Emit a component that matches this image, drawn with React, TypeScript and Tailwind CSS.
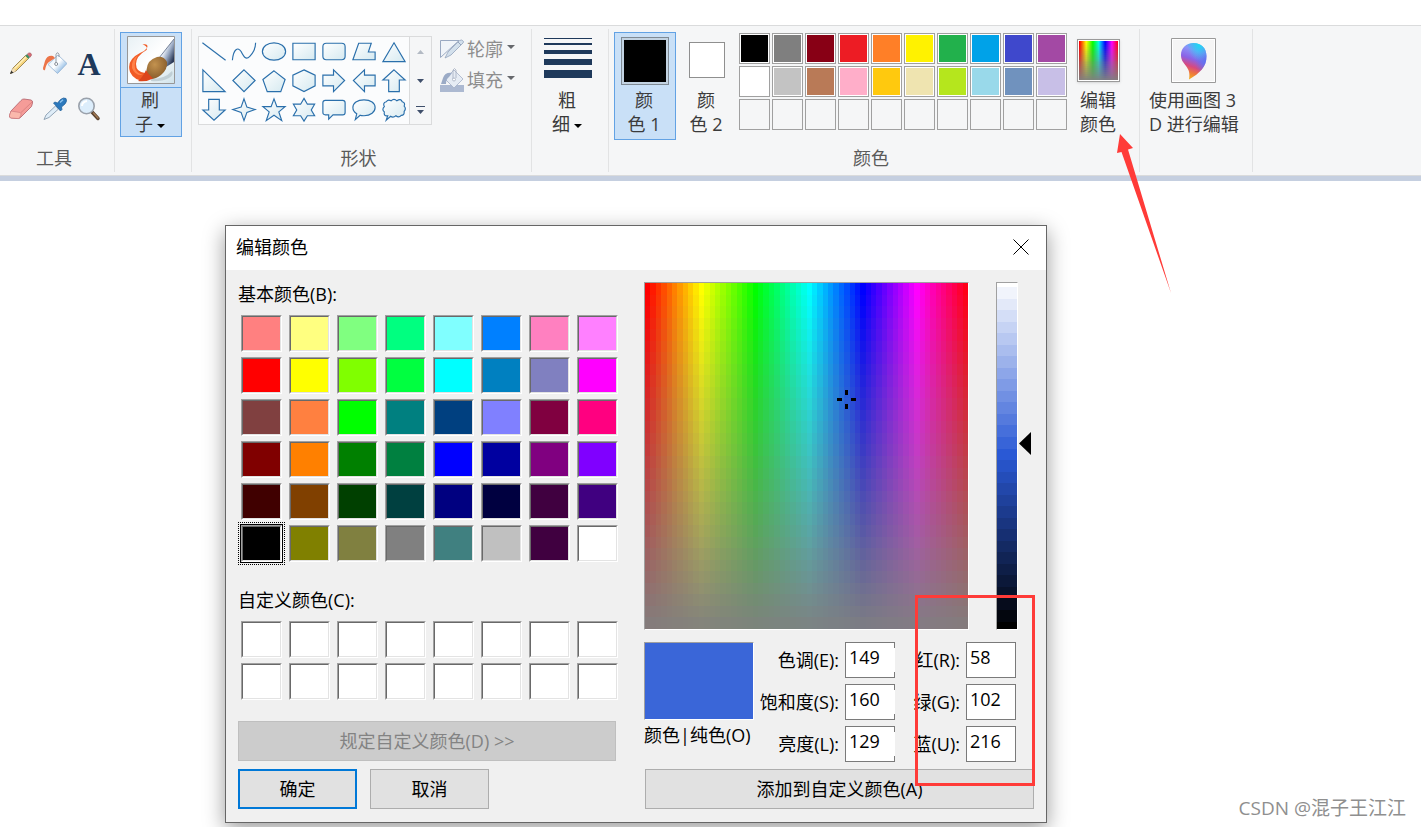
import { useState } from 'react'
import type { ReactNode } from 'react'

const PALETTE = [
  '#000000', '#7f7f7f', '#880015', '#ed1c24', '#ff7f27', '#fff200', '#22b14c', '#00a2e8', '#3f48cc', '#a349a4',
  '#ffffff', '#c3c3c3', '#b97a57', '#ffaec9', '#ffc90e', '#efe4b0', '#b5e61d', '#99d9ea', '#7092be', '#c8bfe7',
]

const BASIC_COLORS = [
  '#ff8080', '#ffff80', '#80ff80', '#00ff80', '#80ffff', '#0080ff', '#ff80c0', '#ff80ff',
  '#ff0000', '#ffff00', '#80ff00', '#00ff40', '#00ffff', '#0080c0', '#8080c0', '#ff00ff',
  '#804040', '#ff8040', '#00ff00', '#008080', '#004080', '#8080ff', '#800040', '#ff0080',
  '#800000', '#ff8000', '#008000', '#008040', '#0000ff', '#0000a0', '#800080', '#8000ff',
  '#400000', '#804000', '#004000', '#004040', '#000080', '#000040', '#400040', '#400080',
  '#000000', '#808000', '#808040', '#808080', '#408080', '#c0c0c0', '#400040', '#ffffff',
]

// Gallery outlines, each drawn in a 30x30 cell
const SHAPES = [
  'M3 6L27 24',
  'M3 24C4 12 9 10 12 15C15 21 17 24 21 20C25 16 27 12 27 6',
  'M15 6C21.600 6 27 10 27 15S21.600 24 15 24S3 20 3 15S8.400 6 15 6Z',
  'M3.500 6.500H26.500V23.500H3.500Z',
  'M7 6.500H23Q26.500 6.500 26.500 10V20Q26.500 23.500 23 23.500H7Q3.500 23.500 3.500 20V10Q3.500 6.500 7 6.500Z',
  'M9.500 6.500H22.500L19.500 15.500H26.500V23.500H3.500Z',
  'M15 6L26.500 25.500H3.500Z',
  'M3.500 4L26.500 26.500H3.500Z',
  'M15 4L26.500 15L15 26.500L3.500 15Z',
  'M15 5L26.500 14L22 26.500H8L3.500 14Z',
  'M15 4L26.500 9.500V20.500L15 26.500L3.500 20.500V9.500Z',
  'M3.500 9.500H14.500V4L26 15L14.500 26.500V20.500H3.500Z',
  'M26.500 9.500H15.500V4L4 15L15.500 26.500V20.500H26.500Z',
  'M15 4L26.500 14.500H20.500V26.500H9.500V14.500H3.500Z',
  'M9.500 4.500H20.500V15.500H26.500L15 26L3.500 15.500H9.500Z',
  'M15 4L18 12.500L26.500 15L18 18L15 26.500L12 18L3.500 15L12 12.500Z',
  'M15 4L18 12H26.500L20 17.500L23 26.500L15 21L7 26.500L10 17.500L3.500 12H12Z',
  'M15 3.500L18.500 9.500H26L22.500 15.500L26 21.500H18.500L15 27L11.500 21.500H4L7.500 15.500L4 9.500H11.500Z',
  'M6 5.500H24Q26.500 5.500 26.500 8V18Q26.500 20.500 24 20.500H14L9.500 25V20.500H6Q3.500 20.500 3.500 18V8Q3.500 5.500 6 5.500Z',
  'M15 5C22 5 26.500 8.500 26.500 13S22 21.500 15 21.500C13.500 21.500 12 21.500 11 21L6 25.500L7.500 19.500C5 18 3.500 16 3.500 13C3.500 8.500 8 5 15 5Z',
  'M7 7Q9 4 12 6Q15 3 18 6Q22 3 23.500 7Q27 8 25.500 11.500Q28 14 25.500 17Q26 21 22.500 21Q20 24 17 21.500Q14 24 11.500 22L7 26L8.500 21.500Q4 22 5 17.500Q2 15 5 12Q3 8 7 7Z',
]

const CAPTION = 'text-[18px] leading-6'

function Group({ label, className, children }: { label?: string; className: string; children: ReactNode }) {
  return (
    <section className={`flex shrink-0 flex-col border-r border-[#e2e3e4] ${className}`}>
      <div className="flex flex-1 items-start pl-[5px] pt-[3px]">{children}</div>
      {label && <div className={`pr-1.5 pb-0.5 text-center text-[#5a5a5a] ${CAPTION}`}>{label}</div>}
    </section>
  )
}

function Caret() {
  return (
    <svg className="ml-1 inline-block align-middle" width="8" height="4" viewBox="0 0 8 4">
      <path d="M0 0H8L4 4Z" fill="currentColor" />
    </svg>
  )
}

function ToolButton({ name, children }: { name: string; children: ReactNode }) {
  return (
    <button aria-label={name} className="block size-6">
      <svg width="24" height="24" viewBox="0 0 24 24">{children}</svg>
    </button>
  )
}

function Spectrum({ cols, rows }: { cols: number; rows: number }) {
  const cells = []
  for (let r = 0; r < rows; r++) {
    for (let c = 0; c < cols; c++) {
      cells.push(
        <rect key={`${r}-${c}`} x={c} y={r} width="1" height="1" fill={`hsl(${(c * 360) / cols} ${100 - (r * 100) / rows}% 50%)`} />
      )
    }
  }
  return (
    <svg className="block size-full" viewBox={`0 0 ${cols} ${rows}`} preserveAspectRatio="none" shapeRendering="crispEdges">
      {cells}
    </svg>
  )
}

function LuminosityBar() {
  return (
    <svg className="block size-full" viewBox="0 0 1 60" preserveAspectRatio="none" shapeRendering="crispEdges">
      {Array.from({ length: 31 }, (_, i) => (
        <rect key={i} x="0" y={i * 2 - 1.3} width="1" height="2.300" fill={`hsl(223.5 67% ${100 - (i * 100) / 30}%)`} />
      ))}
    </svg>
  )
}

function Swatch({ color, selected, onClick }: { color: string; selected?: boolean; onClick?: () => void }) {
  return (
    <button
      aria-label={color}
      onClick={onClick}
      className={`h-[37px] border border-t-[#a0a0a0] border-l-[#a0a0a0] border-r-white border-b-white ${selected ? 'ring-1 ring-black outline-1 outline-offset-2 outline-dotted outline-black' : ''}`}
    >
      <span
        className="block size-full border border-t-[#696969] border-l-[#696969] border-r-[#e3e3e3] border-b-[#e3e3e3]"
        style={{ backgroundColor: color }}
      />
    </button>
  )
}

function Field({ id, label, value, spin }: { id: string; label: string; value: string; spin?: boolean }) {
  return (
    <div className="flex items-center justify-end">
      <label htmlFor={id} className="whitespace-nowrap">{label}</label>
      <div className="relative ml-1.5">
        <input
          id={id}
          defaultValue={value}
          className="block h-9 w-[50px] border border-[#7a7a7a] bg-white pb-1.5 pl-[3px] text-[18px] outline-none"
        />
        {spin && <span className="absolute inset-y-1.5 right-0 w-px bg-white" />}
      </div>
    </div>
  )
}

function Ribbon() {
  return (
    <header className="flex h-[156px] border-t border-b-[5px] border-t-[#dadbdc] border-b-[#c5cfe0] bg-[#f5f6f7] pt-[3px] pb-1 text-[#3b3b3b] shadow-[inset_0_-1px_0_#dadbdc]">
      <Group label="工具" className="w-[115px]">
        <div className="grid grid-cols-3 gap-x-2.5 gap-y-[21px] pl-1 pt-5">
          <ToolButton name="铅笔">
            <path d="M1.500 21.500L4 16L16.500 3.500L19.500 6.500L7 19Z" fill="#f6d57c" stroke="#8a7440" strokeWidth="0.800" />
            <path d="M5.500 16.500L17 5" stroke="#fdf0bd" strokeWidth="1.500" />
            <path d="M18 2.500L19.500 1.200Q21 0.500 22 1.500Q23 3 22 4L20.800 5.300Z" fill="#dd6a74" stroke="#a45a62" strokeWidth="0.700" />
            <path d="M16.300 3.800L18 2.300L20.800 5.200L19.300 6.700Z" fill="#3f8f67" />
            <path d="M4 16L7 19L3.500 20.500L2.500 19.500Z" fill="#f3dfbd" />
            <path d="M1 22L2.300 18.800L4.500 20.700Z" fill="#333" />
          </ToolButton>
          <ToolButton name="用颜色填充">
            <defs>
              <linearGradient id="bucket" x1="0" y1="0.200" x2="0.900" y2="1">
                <stop offset="0" stopColor="#dcecf9" />
                <stop offset="0.450" stopColor="#ffffff" />
                <stop offset="1" stopColor="#5b9bd8" />
              </linearGradient>
            </defs>
            <path d="M15 3L24 11.500L14.500 21.500L5 12.500Z" fill="url(#bucket)" stroke="#93b3d3" strokeWidth="0.800" />
            <path d="M10 4Q4 3 2 9L0 16Q0 19 2 18Q3 12 6 10L12 6Z" fill="#ec7448" />
            <path d="M13 11V2.500Q14.500 -1 16 2.500V5" fill="none" stroke="#8a929c" strokeWidth="0.900" />
            <circle cx="13.200" cy="12" r="1.500" fill="#fff" stroke="#7d858f" strokeWidth="0.900" />
          </ToolButton>
          <button aria-label="文本" className="block size-6 text-center font-['Liberation_Serif',serif] text-[32px] leading-6 font-bold text-[#1e395b]">
            A
          </button>
          <ToolButton name="橡皮擦">
            <path d="M12 3.500Q13 2 15 2L22 3Q24 3.500 23.500 6L22.500 9.500L12 20Q10.500 22 8 21.500L2 21Q0 20.500 0.500 18.500L2 14Z" fill="#f59c98" stroke="#b0606a" strokeWidth="0.800" />
            <path d="M2 14L11 15.500Q12.500 16 12 18L10.500 21Q9.500 22 8 21.500L2 21Q0 20.500 0.500 18.500Z" fill="#fab8ac" stroke="#c9737a" strokeWidth="0.600" />
            <path d="M12 15.500L23 5" stroke="#d67c7c" strokeWidth="0.800" />
          </ToolButton>
          <ToolButton name="颜色选取器">
            <path d="M1 22.500L3 18L12.500 9L15.500 12L6 20.500Z" fill="#dfedf8" stroke="#8a9db0" strokeWidth="0.900" />
            <path d="M10.500 6L12 5L14.500 6L17.500 2.500Q20.500 0 23 1.500Q24.500 4 22 7L18.500 10L19 12.500L17.500 14Z" fill="#2c79bd" stroke="#1c5c97" strokeWidth="0.700" />
            <path d="M17 5.500L20 2.800" stroke="#8cc3ee" strokeWidth="1.500" />
          </ToolButton>
          <ToolButton name="放大镜">
            <path d="M15 15L21 21.500" stroke="#5b4330" strokeWidth="3.500" strokeLinecap="round" />
            <path d="M16.500 16L21 21" stroke="#a47b55" strokeWidth="1.300" strokeLinecap="round" />
            <circle cx="9.500" cy="9" r="7.700" fill="#dcedfb" stroke="#9aa1ab" strokeWidth="1.600" />
            <path d="M5 9Q5 5 10 4" stroke="#fff" strokeWidth="2" fill="none" />
          </ToolButton>
        </div>
      </Group>

      <Group className="w-[77px]">
        <button className="w-[62px] border border-[#62a2e4] bg-[#c9e0f7]">
          <span className="flex h-[55px] items-center justify-center border-b border-[#62a2e4]">
            <svg width="48" height="48" viewBox="0 0 48 48">
              <defs>
                <linearGradient id="paper" x1="0" y1="0" x2="1" y2="1">
                  <stop offset="0" stopColor="#e8f1f5" />
                  <stop offset="0.500" stopColor="#ffffff" />
                  <stop offset="1" stopColor="#cfe2ea" />
                </linearGradient>
                <linearGradient id="ferrule" x1="0.100" y1="0.300" x2="0.800" y2="0.900">
                  <stop offset="0" stopColor="#8c9ab2" />
                  <stop offset="0.250" stopColor="#f4f8ff" />
                  <stop offset="0.600" stopColor="#98a8c2" />
                  <stop offset="1" stopColor="#2c3a58" />
                </linearGradient>
                <radialGradient id="bristle" cx="0.400" cy="0.350" r="0.700">
                  <stop offset="0" stopColor="#c3924f" />
                  <stop offset="1" stopColor="#855a2a" />
                </radialGradient>
              </defs>
              <path d="M0.500 0.500H47.500V47.500H0.500Z" fill="url(#paper)" stroke="#979797" />
              <path d="M24 43Q38 43 45 35Q47 39 42 42Q34 46 24 45Z" fill="#b4c3ca" opacity="0.700" />
              <path d="M19.500 14Q21.500 11 15.500 8Q22 8 20 12Q18 15 13 17Q-1 24 3 36Q7 45 19 45L23 41L18 37Q9 36 9 28Q9 20 19.500 14Z" fill="#f15c26" />
              <path d="M5 32Q4 24 11 19Q7 25 8 32Q9 37 16 39Q8 40 5 32Z" fill="#ff8149" />
              <path d="M32 22L47 3V26L39 31Z" fill="url(#ferrule)" />
              <path d="M32 22L47 3" stroke="#5a6a84" strokeWidth="0.800" />
              <path d="M19.500 34Q20 24 30 21Q37 20 40 26Q41 33 34 39Q29 43 24 43Q20 40 19.500 34Z" fill="url(#bristle)" />
              <path d="M19 34Q21 38 26 42.500Q20 46 11 45Q16 41 19 34Z" fill="#dc451b" />
            </svg>
          </span>
          <span className={`block pr-0.5 ${CAPTION}`}>
            刷<br />子<span className="text-black"><Caret /></span>
          </span>
        </button>
      </Group>

      <Group label="形状" className="w-[340px]">
        <div className="flex pl-px pt-1">
          <div className="grid grid-cols-7 border border-[#dadbdc] bg-[#fbfcfd]">
            {SHAPES.map((d, i) => (
              <button key={i} aria-label={`形状 ${i + 1}`} className="block h-[29px] w-[30px]">
                <svg width="30" height="29" viewBox="0 0 30 30">
                  <defs>
                    <linearGradient id="shape" x1="0" y1="0" x2="1" y2="1">
                      <stop offset="0" stopColor="#ffffff" />
                      <stop offset="1" stopColor="#d5e9f0" />
                    </linearGradient>
                  </defs>
                  <path d={d} fill={i < 2 ? 'none' : 'url(#shape)'} stroke="#2a6fab" strokeWidth="1.200" />
                </svg>
              </button>
            ))}
          </div>
          <div className="flex w-[22px] flex-col border border-l-0 border-[#dadbdc] text-[#3f4f6b]">
            <button aria-label="上移" className="flex flex-1 items-center justify-center text-[#b3bac4]">
              <svg width="7" height="4" viewBox="0 0 7 4"><path d="M3.500 0L7 4H0Z" fill="currentColor" /></svg>
            </button>
            <button aria-label="下移" className="flex flex-1 items-center justify-center">
              <svg width="7" height="4" viewBox="0 0 7 4"><path d="M0 0H7L3.500 4Z" fill="currentColor" /></svg>
            </button>
            <button aria-label="更多" className="flex flex-1 items-center justify-center">
              <svg width="9" height="8" viewBox="0 0 9 8"><path d="M0 0H9V1H0ZM1 4H8L4.500 8Z" fill="currentColor" /></svg>
            </button>
          </div>
        </div>
        <div className={`flex flex-col pl-2 pt-px text-[#8d8d8d] ${CAPTION}`}>
          <button className="flex h-[31px] items-center">
            <svg width="24" height="24" viewBox="0 0 24 24">
              <path d="M0.500 20.500V3.500H19Z" fill="#f0f4f9" stroke="#9aa9c2" />
              <path d="M5 21L8 15L19.500 3.500Q22 2 23.500 4.500Q23.500 6 22 7L11 18Z" fill="#d3e0ec" stroke="#93a3bc" strokeWidth="0.800" />
              <path d="M18 5L21 8" stroke="#93a3bc" />
            </svg>
            <span className="ml-[3px]">轮廓</span>
            <span className="flex pb-1 text-[#66686c]"><Caret /></span>
          </button>
          <button className="flex h-[31px] items-center">
            <svg width="24" height="24" viewBox="0 0 24 24">
              <path d="M0 17H24V24H0Z" fill="#acb9d1" />
              <path d="M14 2L23 11L14 20L5 11Z" fill="#e6ecf4" stroke="#a3b0c7" strokeWidth="0.800" />
              <path d="M12 5Q5 4 3 10L1 16H6Q6 11 9 9Z" fill="#9babc6" />
              <path d="M13 11V2Q14.500 -1 16 2V10" fill="none" stroke="#a3adbf" strokeWidth="0.800" />
              <circle cx="14" cy="11.500" r="1.500" fill="#fff" stroke="#a3adbf" strokeWidth="0.800" />
            </svg>
            <span className="ml-[3px]">填充</span>
            <span className="flex pb-1 text-[#66686c]"><Caret /></span>
          </button>
        </div>
      </Group>

      <Group className="w-[77px]">
        <button className="w-[62px]">
          <span className="flex h-14 items-start justify-center pt-1.5">
            <svg width="48" height="40" viewBox="0 0 48 40">
              <path d="M0 0H48V1H0ZM0 5H48V7H0ZM0 12H48V16H0ZM0 21H48V27H0ZM0 32H48V40H0Z" fill="#1e395b" />
            </svg>
          </span>
          <span className={`block pr-0.5 ${CAPTION}`}>
            粗<br />细<span className="text-black"><Caret /></span>
          </span>
        </button>
      </Group>

      <Group label="颜色" className="w-[531px]">
        <button className="w-[62px] border border-[#62a2e4] bg-[#c9e0f7] pb-[3px]">
          <span className="flex h-[55px] items-center justify-center">
            <span className="size-12 border border-[#7f8a94] bg-[#c3d3e2] p-0.5"><span className="block size-full bg-black" /></span>
          </span>
          <span className={`block pr-0.5 ${CAPTION}`}>颜<br />色 1</span>
        </button>
        <button className="w-[62px]">
          <span className="flex h-14 items-center justify-center">
            <span className="size-9 border border-[#8f8f8f] bg-white" />
          </span>
          <span className={`block pr-0.5 ${CAPTION}`}>颜<br />色 2</span>
        </button>
        <div className="grid grid-cols-10 gap-0.5 pl-px pt-px">
          {PALETTE.map((c) => (
            <button key={c} aria-label={c} className="size-[31px] border border-[#a0a0a0] bg-white p-px">
              <span className="block size-full" style={{ backgroundColor: c }} />
            </button>
          ))}
          {Array.from({ length: 10 }, (_, i) => (
            <button key={i} aria-label="空" className="size-[31px] border border-[#a0a0a0]" />
          ))}
        </div>
        <button className="w-[62px]">
          <span className="flex h-14 items-center justify-center">
            <span className="size-[43px] border border-[#9a9a9a] bg-white p-px shadow-sm"><Spectrum cols={40} rows={20} /></span>
          </span>
          <span className={`block ${CAPTION}`}>编辑<br />颜色</span>
        </button>
      </Group>

      <Group className="w-[113px]">
        <button className="w-[98px] pl-1">
          <span className="flex h-14 items-center">
            <svg className="ml-[22px]" width="45" height="45" viewBox="0 0 45 45">
              <defs>
                <linearGradient id="drop" x1="0.600" y1="0" x2="0.350" y2="1">
                  <stop offset="0" stopColor="#4fb4f4" />
                  <stop offset="0.200" stopColor="#8b93f8" />
                  <stop offset="0.450" stopColor="#8a63e6" />
                  <stop offset="0.650" stopColor="#d8497f" />
                  <stop offset="0.820" stopColor="#ee7a3c" />
                  <stop offset="1" stopColor="#f2b61c" />
                </linearGradient>
                <radialGradient id="glow" cx="0.700" cy="0.050" r="0.450">
                  <stop offset="0" stopColor="#1fd8f2" />
                  <stop offset="1" stopColor="#28c8f4" stopOpacity="0" />
                </radialGradient>
                <radialGradient id="edge" cx="1" cy="0.500" r="0.450">
                  <stop offset="0" stopColor="#5a74f0" />
                  <stop offset="1" stopColor="#5a74f0" stopOpacity="0" />
                </radialGradient>
              </defs>
              <path d="M0.500 0.500H44.500V44.500H0.500Z" fill="#ffffff" stroke="#9a9a9a" />
              <path d="M2 2H43V43H2Z" fill="#f5f5f5" />
              <path d="M22.500 5C30 5 35.500 10 35.500 18C35.500 29 29 35 18 41.500C19 35 18 32 15 28C12 24 10 22 10 17C10 10 15 5 22.500 5Z" fill="url(#drop)" />
              <path d="M22.500 5C30 5 35.500 10 35.500 18C35.500 29 29 35 18 41.500C19 35 18 32 15 28C12 24 10 22 10 17C10 10 15 5 22.500 5Z" fill="url(#edge)" />
              <path d="M22.500 5C30 5 35.500 10 35.500 18C35.500 29 29 35 18 41.500C19 35 18 32 15 28C12 24 10 22 10 17C10 10 15 5 22.500 5Z" fill="url(#glow)" />
            </svg>
          </span>
          <span className={`block text-left whitespace-nowrap ${CAPTION}`}>使用画图 3<br />D 进行编辑</span>
        </button>
      </Group>
    </header>
  )
}

function ColorDialog() {
  const [selected, setSelected] = useState(40)

  return (
    <div
      role="dialog"
      aria-label="编辑颜色"
      className="absolute top-[225px] left-[225px] w-[822px] border border-[#666] bg-[#f0f0f0] text-[18px] leading-6 text-black shadow-[0_6px_20px_rgba(0,0,0,0.4)]"
    >
      <div className="flex h-11 items-center justify-between bg-white pr-[17px] pb-0.5 pl-2.5">
        <h1>编辑颜色</h1>
        <button aria-label="关闭">
          <svg width="16" height="16" viewBox="0 0 16 16">
            <path d="M0.500 0.500L15.500 15.500M15.500 0.500L0.500 15.500" stroke="#000" />
          </svg>
        </button>
      </div>

      <div className="flex gap-7 px-3 pt-3 pb-[13px]">
        <div className="w-[378px]">
          <div className="mb-[9px]">基本颜色(B):</div>
          <div className="grid grid-cols-[repeat(8,41px)] gap-x-[7px] gap-y-[5px] pl-[3px]">
            {BASIC_COLORS.map((c, i) => (
              <Swatch key={i} color={c} selected={i === selected} onClick={() => setSelected(i)} />
            ))}
          </div>
          <div className="mt-[26px] mb-[9px]">自定义颜色(C):</div>
          <div className="grid grid-cols-[repeat(8,41px)] gap-x-[7px] gap-y-[5px] pl-[3px]">
            {Array.from({ length: 16 }, (_, i) => (
              <Swatch key={i} color="#ffffff" />
            ))}
          </div>
          <button disabled className="mt-[21px] h-10 w-full border border-[#bfbfbf] bg-[#cccccc] text-[#838383]">
            规定自定义颜色(D) &gt;&gt;
          </button>
          <div className="mt-2 flex gap-[13px]">
            <button className="h-10 w-[119px] border-2 border-[#0078d7] bg-[#e1e1e1]">确定</button>
            <button className="h-10 w-[119px] border border-[#adadad] bg-[#e1e1e1]">取消</button>
          </div>
        </div>

        <div className="flex w-[390px] flex-col">
          <div className="flex">
            <div className="relative h-[348px] w-[325px] border border-t-[#a0a0a0] border-l-[#a0a0a0] border-r-white border-b-white">
              <Spectrum cols={60} rows={30} />
              <svg className="absolute top-[107px] left-[192px]" width="19" height="19" viewBox="0 0 19 19">
                <path d="M8 0H11V5H8ZM8 14H11V19H8ZM0 8H5V11H0ZM14 8H19V11H14Z" fill="#000" />
              </svg>
            </div>
            <div className="ml-[27px] h-[348px] w-[22px] border border-t-[#a0a0a0] border-l-[#a0a0a0] border-r-white border-b-white">
              <LuminosityBar />
            </div>
            <svg className="mt-[150px] ml-px" width="12" height="23" viewBox="0 0 12 23">
              <path d="M0 11.500L12 0V23Z" fill="#000" />
            </svg>
          </div>

          <div className="mt-3 flex">
            <div className="w-[110px]">
              <div className="h-[78px] border border-t-[#a0a0a0] border-l-[#a0a0a0] border-r-white border-b-white bg-[#3a66d8]" />
              <div className="mt-[3px] whitespace-nowrap">颜色|纯色(O)</div>
            </div>
            <div className="flex w-[141px] flex-col gap-1.5">
              <Field id="hue" label="色调(E):" value="149" spin />
              <Field id="sat" label="饱和度(S):" value="160" spin />
              <Field id="lum" label="亮度(L):" value="129" spin />
            </div>
            <div className="flex w-[121px] flex-col gap-1.5">
              <Field id="red" label="红(R):" value="58" />
              <Field id="green" label="绿(G):" value="102" />
              <Field id="blue" label="蓝(U):" value="216" />
            </div>
          </div>

          <button className="mt-auto ml-px h-10 border border-[#adadad] bg-[#e1e1e1]">添加到自定义颜色(A)</button>
        </div>
      </div>

      {/* highlight around the RGB fields */}
      <div className="pointer-events-none absolute top-[369px] left-[689px] h-[191px] w-[120px] border-[3px] border-[#ff3b38]" />
    </div>
  )
}

export default function App() {
  return (
    <div className="relative min-h-screen overflow-hidden bg-white pt-[25px] font-['Open_Sans','Noto_Sans_CJK_SC',sans-serif]">
      <Ribbon />
      <ColorDialog />
      <svg className="pointer-events-none absolute top-[133px] left-[1116px]" width="56" height="161" viewBox="0 0 56 161">
        <path d="M4 1L17 15L12 16.500L55 160L5.500 19L1 20Z" fill="#ff3b38" />
      </svg>
      <div className="absolute right-[15px] bottom-[7px] text-[19px] leading-6 text-[#8f8f8f]">CSDN @混子王江江</div>
    </div>
  )
}
